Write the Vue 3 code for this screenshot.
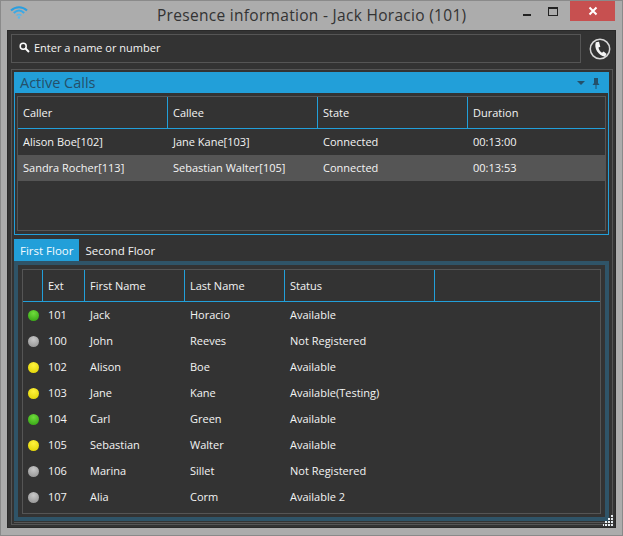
<template>
  <div class="window">
    <header class="titlebar">
      <svg class="app-icon" width="18" height="14" viewBox="0 0 18 14">
        <path d="M1 5.500C5.500 1 12.500 1 17 5.500" fill="none" stroke="#2a9fe0" stroke-width="2" />
        <path d="M3.800 8C7 5 11 5 14.200 8" fill="none" stroke="#3aa9e6" stroke-width="2" />
        <path d="M6.500 10.500C8 9.300 10 9.300 11.500 10.500" fill="none" stroke="#56b8ee" stroke-width="1.600" />
        <circle cx="9" cy="12.500" r="1.200" fill="#56b8ee" />
      </svg>
      <span class="title">Presence information - Jack Horacio (101)</span>
      <div class="controls">
        <span class="ctl min"><i></i></span>
        <span class="ctl max"><i></i></span>
        <span class="ctl close">
          <svg width="10" height="10" viewBox="0 0 10 10"><path d="M1.500 1.500L8.500 8.500M8.500 1.500L1.500 8.500" stroke="#fff" stroke-width="2" /></svg>
        </span>
      </div>
    </header>

    <main class="content">
      <div class="search-row">
        <div class="search">
          <svg width="11" height="11" viewBox="0 0 11 11">
            <circle cx="4.200" cy="4.200" r="3" fill="none" stroke="#fff" stroke-width="1.500" />
            <path d="M6.500 6.500L10 10" stroke="#fff" stroke-width="2" />
          </svg>
          <span>Enter a name or number</span>
        </div>
        <svg class="phone" width="22" height="22" viewBox="0 0 22 22">
          <circle cx="11" cy="11" r="9.700" fill="none" stroke="#d8d8d8" stroke-width="1.500" />
          <path d="M6.800 4.200C4.800 10 9 17.200 16 18.800L17.600 15.900L14.600 13.500L13 14.800C11 13.800 9.800 11.500 9.500 9.500L11.300 8.800L10 3.800Z" fill="#f4f4f4" />
        </svg>
      </div>

      <div class="dock">
        <section class="calls">
          <div class="calls-head">
            <span>Active Calls</span>
            <div class="head-icons">
              <i class="caret"></i>
              <svg width="8" height="12" viewBox="0 0 8 12">
                <path d="M2 1H6V6L7.500 8H0.500L2 6ZM3.500 8H4.500V12H3.500Z" fill="#24506a" />
              </svg>
            </div>
          </div>
          <div class="grid calls-grid">
            <div class="row head">
              <div v-for="c in callCols" :key="c" class="cell">{{ c }}</div>
            </div>
            <div v-for="(call, i) in calls" :key="i" class="row" :class="{ selected: i === 1 }">
              <div v-for="(v, j) in call" :key="j" class="cell">{{ v }}</div>
            </div>
          </div>
        </section>

        <nav class="tabs">
          <span class="tab active">First Floor</span>
          <span class="tab">Second Floor</span>
        </nav>
        <section class="tab-body">
          <div class="grid ext-grid">
            <div class="row head">
              <div class="cell dot-col"></div>
              <div class="cell ext">Ext</div>
              <div class="cell name">First Name</div>
              <div class="cell name">Last Name</div>
              <div class="cell status">Status</div>
              <div class="cell filler"></div>
            </div>
            <div v-for="p in people" :key="p.ext" class="row">
              <div class="cell dot-col"><i class="dot" :class="p.color"></i></div>
              <div class="cell ext">{{ p.ext }}</div>
              <div class="cell name">{{ p.first }}</div>
              <div class="cell name">{{ p.last }}</div>
              <div class="cell status">{{ p.status }}</div>
              <div class="cell filler"></div>
            </div>
          </div>
        </section>
        <div class="tab-rule"></div>
      </div>
      <svg class="grip" width="11" height="11" viewBox="0 0 11 11" fill="#e8eef2">
        <rect x="8" y="0" width="2" height="2" />
        <rect x="5" y="3" width="2" height="2" /><rect x="8" y="3" width="2" height="2" />
        <rect x="2" y="6" width="2" height="2" /><rect x="5" y="6" width="2" height="2" /><rect x="8" y="6" width="2" height="2" />
        <rect x="-1" y="9" width="2" height="2" /><rect x="2" y="9" width="2" height="2" /><rect x="5" y="9" width="2" height="2" /><rect x="8" y="9" width="2" height="2" />
      </svg>
    </main>
  </div>
</template>

<script setup>
const callCols = ['Caller', 'Callee', 'State', 'Duration']

const calls = [
  ['Alison Boe[102]', 'Jane Kane[103]', 'Connected', '00:13:00'],
  ['Sandra Rocher[113]', 'Sebastian Walter[105]', 'Connected', '00:13:53'],
]

const people = [
  { ext: 101, first: 'Jack', last: 'Horacio', status: 'Available', color: 'green' },
  { ext: 100, first: 'John', last: 'Reeves', status: 'Not Registered', color: 'grey' },
  { ext: 102, first: 'Alison', last: 'Boe', status: 'Available', color: 'yellow' },
  { ext: 103, first: 'Jane', last: 'Kane', status: 'Available(Testing)', color: 'yellow' },
  { ext: 104, first: 'Carl', last: 'Green', status: 'Available', color: 'green' },
  { ext: 105, first: 'Sebastian', last: 'Walter', status: 'Available', color: 'yellow' },
  { ext: 106, first: 'Marina', last: 'Sillet', status: 'Not Registered', color: 'grey' },
  { ext: 107, first: 'Alia', last: 'Corm', status: 'Available 2', color: 'grey' },
]
</script>

<style>
html,
body {
  margin: 0;
  background: #acacac;
}
</style>

<style scoped>
.window {
  width: 623px;
  height: 536px;
  box-sizing: border-box;
  border: 1px solid #8a8a8a;
  background: #acacac;
  font-family: "Open Sans", Roboto, sans-serif;
  font-size: 11px;
  color: #f4f4f4;
  overflow: hidden;
}

.titlebar {
  height: 29px;
  display: flex;
  align-items: center;
  position: relative;
  padding-left: 9px;
}

.app-icon {
  margin-top: -8px;
}

.title {
  position: absolute;
  left: 156px;
  top: 3px;
  font-size: 15.5px;
  letter-spacing: 0.3px;
  color: #333;
  white-space: nowrap;
}

.controls {
  margin-left: auto;
  margin-right: 7px;
  align-self: flex-start;
  display: flex;
}

.ctl {
  display: flex;
  align-items: center;
  justify-content: center;
  height: 20px;
}

.min {
  width: 26px;
}

.min i {
  width: 8px;
  height: 2px;
  background: #222;
  margin-top: 7px;
}

.max {
  width: 26px;
  margin-right: 4px;
}

.max i {
  width: 8px;
  height: 6px;
  border: 1px solid #222;
  border-top-width: 2px;
}

.close {
  width: 45px;
  background: #c75050;
}

.content {
  position: relative;
  margin: 0 6px;
  height: 498px;
  box-sizing: border-box;
  background: #333;
  border: 1px solid #2a2a2a;
  padding: 3px;
}

.search-row {
  display: flex;
  align-items: center;
  gap: 8px;
}

.search {
  width: 570px;
  height: 29px;
  box-sizing: border-box;
  border: 1px solid #555;
  display: flex;
  align-items: center;
  gap: 4px;
  padding: 0 7px 3px;
}

.dock {
  margin-top: 6px;
  width: 602px;
  height: 456px;
  box-sizing: border-box;
  border: 1px solid #555;
  padding: 2px;
}

.calls {
  width: 595px;
  height: 163px;
  box-sizing: border-box;
  border: 1px solid #229fd9;
  border-top: 0;
}

.calls-head {
  height: 21px;
  background: #229fd9;
  color: #24506a;
  font-size: 14.500px;
  line-height: 21px;
  padding-left: 5px;
  display: flex;
  justify-content: space-between;
  align-items: center;
}

.head-icons {
  display: flex;
  align-items: center;
  gap: 7px;
  padding-right: 8px;
}

.caret {
  width: 0;
  height: 0;
  border: 4px solid transparent;
  border-top: 4px solid #24506a;
  border-bottom: 0;
}

.grid {
  border: 1px solid #555;
  box-sizing: border-box;
}

.calls-grid {
  margin: 3px 2px 0;
  height: 135px;
}

.row {
  display: flex;
  height: 26px;
  align-items: stretch;
}

.row.head {
  height: 31px;
  border-bottom: 1px solid #229fd9;
}

.row.selected {
  background: #555;
}

.cell {
  flex: none;
  display: flex;
  align-items: center;
  padding-left: 5px;
  padding-bottom: 2px;
  box-sizing: border-box;
  white-space: nowrap;
}

.head .cell {
  padding-bottom: 0;
  border-right: 1px solid #229fd9;
}

.calls-grid .cell {
  width: 150px;
}

.calls-grid .cell:last-child {
  flex: 1;
  width: auto;
}

.calls-grid .head .cell:last-child {
  border-right: 0;
}

.tabs {
  display: flex;
  margin-top: 4px;
  height: 22px;
  font-size: 11.500px;
}

.tab {
  padding: 1px 6px 0;
  line-height: 22px;
}

.tab.active {
  background: #229fd9;
  color: #f4fbff;
}

.tab-body {
  width: 595px;
  height: 260px;
  box-sizing: border-box;
  border: 4px solid #2f5468;
  padding: 4px;
}

.tab-rule {
  width: 595px;
  height: 1px;
  margin-top: 1px;
  background: #555;
}

.ext-grid {
  height: 245px;
}

.dot-col {
  width: 20px;
  padding-left: 5px;
  padding-bottom: 0;
}

.ext {
  width: 42px;
}

.name {
  width: 100px;
}

.status {
  width: 150px;
}

.filler {
  flex: 1;
  border-right: 0 !important;
}

.dot {
  display: block;
  width: 11px;
  height: 11px;
  border-radius: 50%;
}

.green {
  background: radial-gradient(circle at 50% 30%, #6fdc3c, #2f9e10);
}

.yellow {
  background: radial-gradient(circle at 50% 30%, #fff23c, #dcd000);
}

.grey {
  background: radial-gradient(circle at 50% 30%, #c8c8c8, #8e8e8e);
}

.phone {
  flex-shrink: 0;
}

.grip {
  position: absolute;
  right: 1px;
  bottom: 1px;
}
</style>
